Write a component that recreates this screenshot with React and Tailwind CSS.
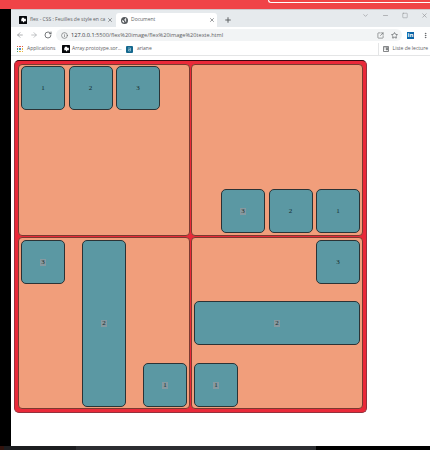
import React from "react";
import { X, Plus, Minus, Square, ChevronDown, ArrowLeft, ArrowRight, RotateCw, Info, Star, EllipsisVertical, SquareArrowOutUpRight } from "lucide-react";

function Box({ n, mark, className = "" }) {
  return (
    <div className={`flex h-11 w-11 shrink-0 items-center justify-center rounded-[5px] border border-[#2b3336] bg-[#5b98a3] font-['Liberation_Serif',serif] text-[7px] leading-none text-[#15282e] ${className}`}>
      <span className={mark ? "bg-[#8699a0] px-px" : ""}>{n}</span>
    </div>
  );
}

const cell = "rounded-[4px] border border-[#7b3a30] bg-[#f19e7b] ";

function JumpIcon() {
  return (
    <svg viewBox="0 0 14 14" className="h-[8px] w-[8px] shrink-0">
      <rect width="14" height="14" rx="1" fill="#05070a" />
      <path d="M5 3h4v2h3v4H9v2H7V9H4V5h1z" fill="#fff" />
    </svg>
  );
}

function GlobeIcon() {
  return (
    <svg viewBox="0 0 14 14" className="h-[7px] w-[7px] shrink-0">
      <circle cx="7" cy="7" r="7" fill="#55595d" />
      <path d="M2 6l4 2v2l1 2-4-2zM8 2l3 2-2 2 2 2-2 2-1-3-2-1 2-2z" fill="#fff" />
    </svg>
  );
}

export default function App() {
  return (
    <div className="flex h-[450px] w-[430px] flex-col overflow-hidden bg-white font-['Open_Sans',sans-serif] text-[#5d6063]">
      <div className="h-[9px] shrink-0 bg-[#f04347]">
        <div className="ml-[268px] h-[3px] rounded-bl-[3px] border-b border-l border-white" />
      </div>
      <div className="flex h-[437px] shrink-0">
        <div className="w-[11px] shrink-0 bg-black" />
        <div className="flex w-[419px] flex-col">
          <div className="flex h-[18px] shrink-0 border-t border-[#cfc6ca] bg-[#e6eaed]">
            <div className="mt-[3px] flex w-[105px] items-center pl-2 pr-[3px] text-[5px]">
              <JumpIcon />
              <span className="ml-[3px] whitespace-nowrap">flex - CSS : Feuilles de style en ca</span>
              <X className="ml-auto h-[6px] w-[6px] shrink-0" strokeWidth={2.5} />
            </div>
            <div className="mt-[3px] flex w-[101px] items-center rounded-t-[3px] bg-white pl-[5px] pr-[2px] text-[5px]">
              <GlobeIcon />
              <span className="ml-[3px]">Document</span>
              <X className="ml-auto h-[6px] w-[6px]" strokeWidth={2.5} />
            </div>
            <Plus className="ml-[7px] mt-[6px] h-[8px] w-[8px]" strokeWidth={3} />
            <div className="ml-auto mt-[2px] flex gap-[13px] pr-[2px] text-[#8b8e91]">
              <ChevronDown className="h-[7px] w-[7px]" />
              <Minus className="h-[7px] w-[7px]" />
              <Square className="h-[7px] w-[6px]" />
              <X className="h-[7px] w-[7px]" />
            </div>
          </div>
          <div className="flex h-4 shrink-0 items-center pl-[5px]">
            <ArrowLeft className="h-[8px] w-[8px] shrink-0 text-[#85888b]" />
            <ArrowRight className="ml-[6px] h-[8px] w-[8px] shrink-0 text-[#a5a8ab]" />
            <RotateCw className="ml-[6px] h-[8px] w-[8px] shrink-0" strokeWidth={2.5} />
            <div className="ml-[4px] flex h-3 w-[346px] shrink-0 items-center rounded-full bg-[#f2f4f5] pl-[5px] pr-[4px]">
              <Info className="h-[7px] w-[7px] shrink-0" />
              <span className="ml-[3px] whitespace-nowrap text-[5.6px]"><span className="text-[#303336]">127.0.0.1</span>:5500/flex%20image/flex%20image%20texte.html</span>
              <SquareArrowOutUpRight className="ml-auto h-[7px] w-[7px]" />
              <Star className="ml-[7px] h-[7px] w-[7px]" strokeWidth={2.5} />
            </div>
            <div className="ml-[5px] flex h-[7px] w-[7px] shrink-0 items-center justify-center bg-[#0a66a8] text-[6px] font-bold leading-none text-white">in</div>
            <EllipsisVertical className="ml-[8px] h-[7px] w-[7px] shrink-0" strokeWidth={3} />
          </div>
          <div className="flex h-[13px] shrink-0 items-center border-b border-[#e4e5e6] pl-[6px] text-[5px]">
            <div className="grid h-[6px] w-[6px] grid-cols-3 gap-px">
              <i className="bg-[#d85845]" /><i className="bg-[#e46451]" /><i className="bg-[#dc5747]" />
              <i className="bg-[#4d9c68]" /><i className="bg-[#4f8fd1]" /><i className="bg-[#e9b63d]" />
              <i className="bg-[#4d9c68]" /><i className="bg-[#e9b63d]" /><i className="bg-[#e9b63d]" />
            </div>
            <span className="ml-1 w-[35px]">Applications</span>
            <JumpIcon />
            <span className="ml-[2px] w-[54px] whitespace-nowrap">Array.prototype.sor...</span>
            <svg viewBox="0 0 14 14" className="h-[7px] w-[7px] shrink-0">
              <rect width="14" height="14" rx="2" fill="#14688e" />
              <path d="M4 4h5v6H5V7h4" fill="none" stroke="#9bc7d8" strokeWidth="1.5" />
            </svg>
            <span className="ml-1">ariane</span>
            <div className="ml-auto mr-1 h-3 border-l border-[#e4e5e6]" />
            <svg viewBox="0 0 12 12" className="h-[6px] w-[6px]"><path d="M1 1h10v10H1zM3 3h2M3 6h2M7 3h2v5H7z" fill="none" stroke="currentColor" strokeWidth="1.5" /></svg>
            <span className="ml-1 mr-[2px] whitespace-nowrap">Liste de lecture</span>
          </div>
          <div className="ml-[3px] mt-[4px] grid h-[353px] w-[353px] shrink-0 grid-cols-2 grid-rows-2 gap-px rounded-[5px] border border-[#93323d] border-t-[#3b0810] bg-[#ea2939] p-[3px]">
            <div className={cell + "flex items-start gap-[3.5px] px-[2px] pt-px"}>
              <Box n="1" /><Box n="2" /><Box n="3" />
            </div>
            <div className={cell + "flex flex-row-reverse items-end gap-[3.5px] p-[2px]"}>
              <Box n="1" /><Box n="2" /><Box n="3" mark />
            </div>
            <div className={cell + "flex flex-row-reverse justify-between px-[2px] pb-px pt-[2px]"}>
              <Box n="1" mark className="self-end" /><Box n="2" mark className="h-full" /><Box n="3" mark />
            </div>
            <div className={cell + "flex flex-col-reverse justify-between px-[2px] pb-px pt-[2px]"}>
              <Box n="1" mark /><Box n="2" mark className="mb-px w-full" /><Box n="3" className="self-end" />
            </div>
          </div>
        </div>
      </div>
      <div className="flex h-1 shrink-0 bg-black">
        <div className="w-1 bg-[#32130d]" />
        <div className="w-[72px] bg-[#1c1d20]" />
        <div className="w-[240px] bg-[#2c2d31]" />
      </div>
    </div>
  );
}
